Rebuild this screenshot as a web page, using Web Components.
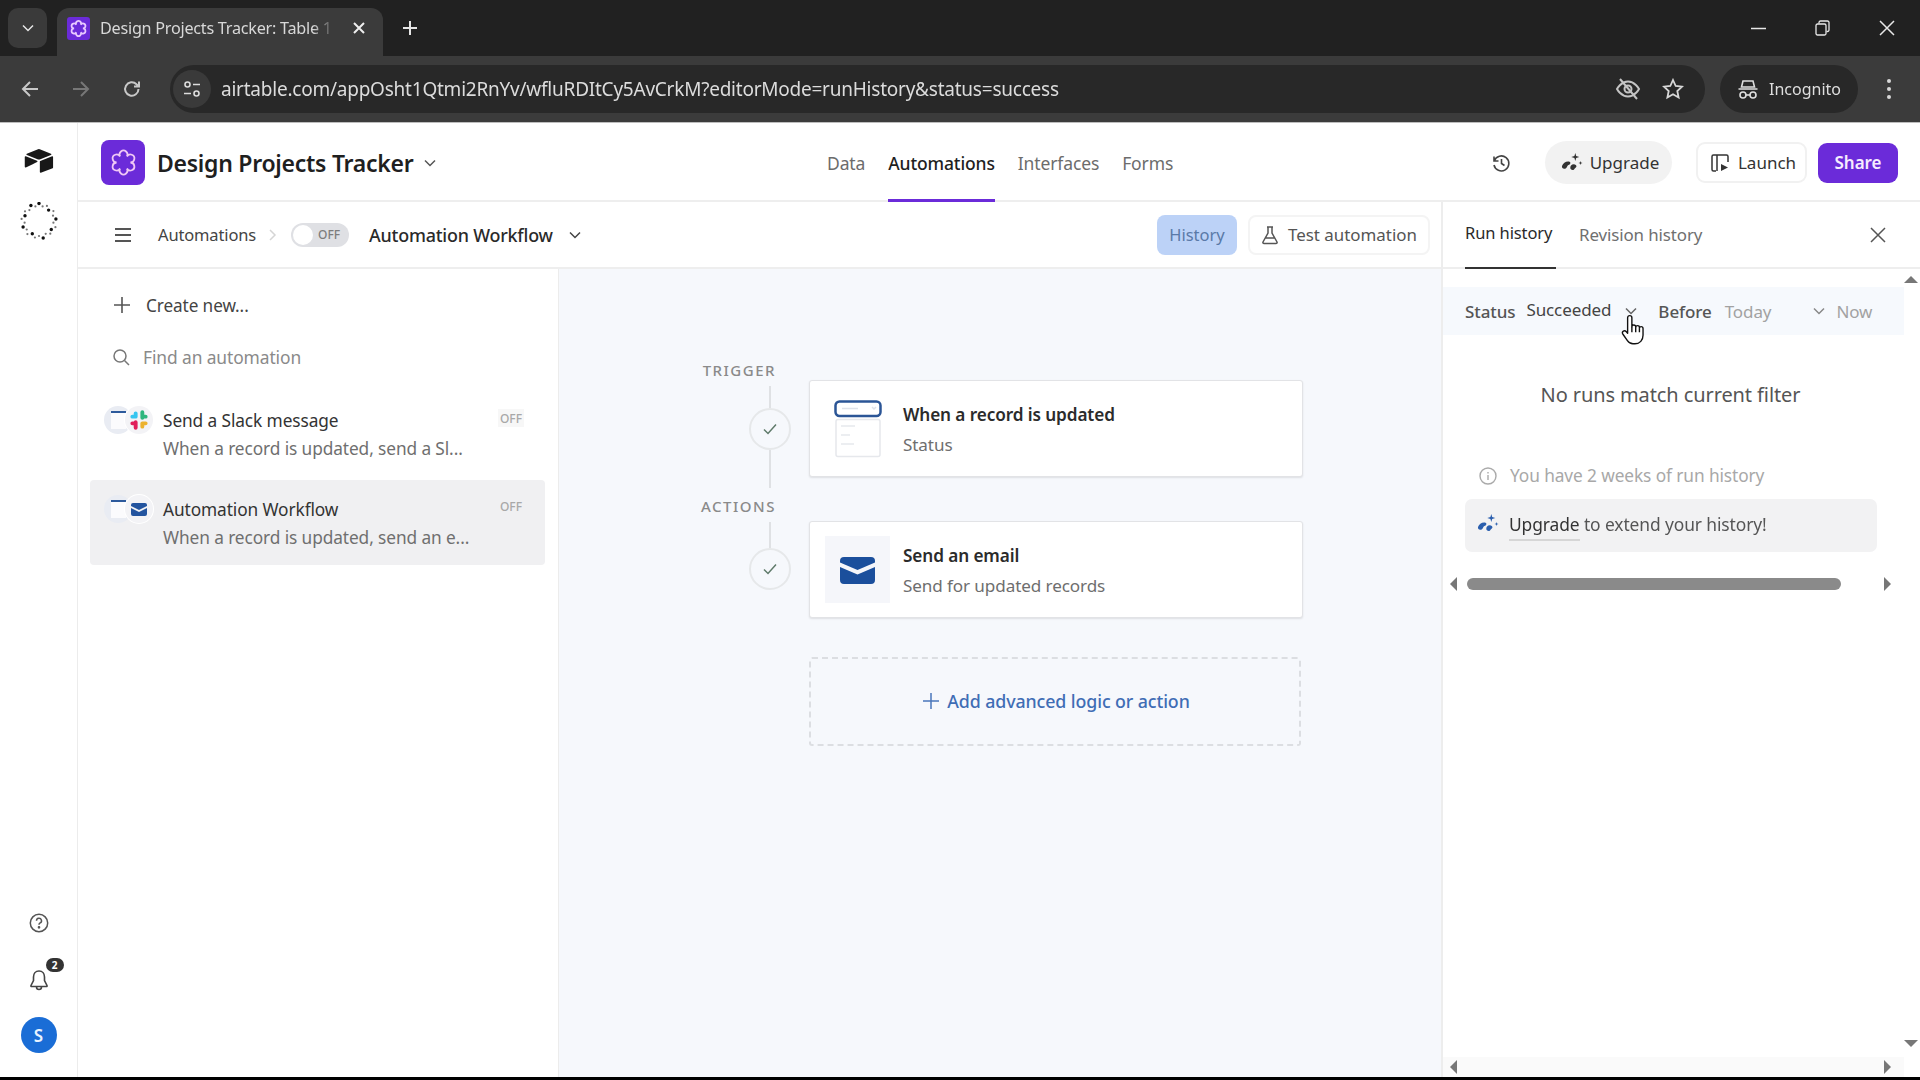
<!DOCTYPE html>
<html lang="en"><head><meta charset="utf-8"><title>Design Projects Tracker</title>
<style>
html,body{margin:0;padding:0;width:1920px;height:1080px;overflow:hidden;background:#000}
body{font-family:"Noto Sans","Open Sans",sans-serif;display:flex;flex-direction:column}
</style></head><body>
<browser-chrome></browser-chrome>
<app-frame></app-frame>
<script>
const def=(n,css,html)=>customElements.define(n,class extends HTMLElement{constructor(){super();this.attachShadow({mode:'open'}).innerHTML=`<style>${css}</style>${html}`}});
const FLOWER='M14.5 7.67A2.9 2.9 0 1 1 17 12A2.9 2.9 0 1 1 14.5 16.33A2.9 2.9 0 1 1 9.5 16.33A2.9 2.9 0 1 1 7 12A2.9 2.9 0 1 1 9.5 7.67A2.9 2.9 0 1 1 14.5 7.67Z';
const SPARK=(c)=>`<svg width="24" height="24" viewBox="0 0 24 24" fill="${c}"><path d="M2 15c1-3 4-5 7-4.500 1.500.3 1.800 1.500 1 2.500-.5.7-1.300.8-2 1.300-1 .8-1 2.500-2.300 3.200C3.500 18.500 1.500 17 2 15z"/><path d="M11 14.500c1.200-1.300 3.500-1.500 4.800-.5 1 .8.8 2-.2 2.700-1 .7-1.300 2-2.500 2.300-1.500.3-2.800-.8-2.800-2.200 0-.9.200-1.700.7-2.300z"/><path d="M15.300 2l.9 3.100 3.100.9-3.100.9-.9 3.100-.9-3.100-3.100-.9 3.100-.9zM20.500 10l.5 1.500 1.500.5-1.500.5-.5 1.500-.5-1.500-1.500-.5 1.500-.5z"/></svg>`;
const CHEV=(c,w=14)=>`<svg width="${w}" height="${w}" viewBox="0 0 14 14" fill="none" stroke="${c}" stroke-width="1.500"><path d="M2 4.500l5 5 5-5"/></svg>`;

def('browser-chrome',`
:host{display:block;height:123px;flex:none;background:#3b3b3b;color:#e3e3e3;filter:blur(.35px)}
.strip{height:56px;background:#212121;display:flex;align-items:flex-end;padding-left:8px;box-sizing:border-box}
.list{width:39px;height:40px;background:#3a3a3a;border-radius:10px;display:flex;align-items:center;justify-content:center;margin-bottom:8px}
.tab{width:326px;height:48px;margin-left:10px;background:#3b3b3b;border-radius:12px 12px 0 0;display:flex;align-items:center;padding:0 0 8px 10px;box-sizing:border-box}
.fav{width:23px;height:23px;border-radius:3px;background:#6b2bd9;display:flex;align-items:center;justify-content:center;flex:none}
.ttl{font-size:16.200px;letter-spacing:-.25px;color:#d8d8d8;margin-left:10px;width:236px;white-space:nowrap;flex:none;-webkit-mask-image:linear-gradient(90deg,#000 90%,transparent);mask-image:linear-gradient(90deg,#000 90%,transparent)}
.x{margin-left:16px;display:flex}
.plus{margin:0 0 8px 19px;height:40px;display:flex;align-items:center}
.win{margin-left:auto;display:flex;align-self:center;gap:49px;padding-right:25px;align-items:center}
.bar{height:67px;box-sizing:border-box;display:flex;align-items:center;padding:0 0 1px 20px;border-bottom:1px solid #bdbdbd}
.nav{display:flex;width:20px;height:20px;align-items:center;justify-content:center;margin-right:31px}
.url{margin-left:-3px;width:1535px;height:48px;background:#282828;border-radius:24px;display:flex;align-items:center;box-sizing:border-box}
.info{width:38px;height:38px;margin-left:3px;border-radius:50%;background:#3a3a3a;display:flex;align-items:center;justify-content:center;flex:none}
.txt{margin-left:10px;font-size:19px;letter-spacing:-.23px;color:#dcdcdc;white-space:nowrap;flex:1}
.eye{display:flex;margin-right:21px}
.star{display:flex;margin-right:21px}
.inc{margin-left:15px;width:138px;height:48px;background:#282828;border-radius:24px;display:flex;align-items:center;padding-left:17px;box-sizing:border-box;font-size:16px;gap:10px;color:#dedede}
.dots{margin-left:28px;display:flex}
`,`
<div class="strip">
 <div class="list">${CHEV('#e6e6e6')}</div>
 <div class="tab"><span class="fav"><svg width="21" height="21" viewBox="0 0 24 24" fill="none" stroke="#e8c9ff" stroke-width="2"><path d="${FLOWER}"/></svg></span><span class="ttl">Design Projects Tracker: Table 1</span>
 <span class="x"><svg width="14" height="14" viewBox="0 0 14 14" stroke="#eee" stroke-width="2"><path d="M2 2l10 10M12 2L2 12"/></svg></span></div>
 <div class="plus"><svg width="16" height="16" viewBox="0 0 16 16" stroke="#e6e6e6" stroke-width="2"><path d="M8 1v14M1 8h14"/></svg></div>
 <div class="win">
  <svg width="15" height="15" viewBox="0 0 15 15" stroke="#e8e8e8" stroke-width="1.500"><path d="M0 7.500h15"/></svg>
  <svg width="15" height="16" viewBox="0 0 15 16" fill="none" stroke="#e8e8e8" stroke-width="1.300"><rect x="1" y="4" width="10" height="11" rx="1.500"/><path d="M4 3.500V2.500a1.500 1.500 0 0 1 1.500-1.500h7A1.500 1.500 0 0 1 14 2.500V10a1.500 1.500 0 0 1-1.500 1.500H11.500"/></svg>
  <svg width="16" height="16" viewBox="0 0 16 16" stroke="#e8e8e8" stroke-width="1.500"><path d="M1 1l14 14M15 1L1 15"/></svg>
 </div>
</div>
<div class="bar">
 <span class="nav"><svg width="20" height="20" viewBox="0 0 20 20" fill="none" stroke="#c8c8c8" stroke-width="2"><path d="M18 10H3M10 3l-7 7 7 7"/></svg></span>
 <span class="nav"><svg width="20" height="20" viewBox="0 0 20 20" fill="none" stroke="#777" stroke-width="2"><path d="M2 10h15M10 3l7 7-7 7"/></svg></span>
 <span class="nav"><svg width="20" height="20" viewBox="0 0 20 20" fill="none" stroke="#c8c8c8" stroke-width="2"><path d="M16.500 10a6.700 6.700 0 1 1-2-4.800L17 7.500M17 2.500v5h-5"/></svg></span>
 <div class="url">
  <span class="info"><svg width="20" height="20" viewBox="0 0 20 20" fill="none" stroke="#dcdcdc" stroke-width="1.600"><circle cx="5.500" cy="5.500" r="2.500"/><path d="M11 5.500h7M2 14.500h7"/><circle cx="14.500" cy="14.500" r="2.500"/></svg></span>
  <span class="txt">airtable.com/appOsht1Qtmi2RnYv/wfluRDItCy5AvCrkM?editorMode=runHistory&amp;status=success</span>
  <span class="eye"><svg width="26" height="26" viewBox="0 0 26 26" fill="none" stroke="#c4c4c4" stroke-width="2"><path d="M2 13s4-7.500 11-7.500S24 13 24 13s-4 7.500-11 7.500S2 13 2 13z"/><circle cx="13" cy="13" r="3.500"/><path d="M5 3l17 20"/></svg></span>
  <span class="star"><svg width="22" height="22" viewBox="0 0 22 22" fill="none" stroke="#d8d8d8" stroke-width="1.800"><path d="M11 2l2.700 6 6.300.7-4.700 4.300 1.300 6.500L11 16.300 5.400 19.500 6.700 13 2 8.700 8.300 8z"/></svg></span>
 </div>
 <div class="inc"><svg width="22" height="22" viewBox="0 0 22 22" fill="none" stroke="#dedede" stroke-width="1.600"><path d="M6 3h10l1.500 6h-13zM1.500 11h19" /><circle cx="6" cy="17" r="3"/><circle cx="16" cy="17" r="3"/><path d="M9 17h4"/></svg><span>Incognito</span></div>
 <span class="dots"><svg width="6" height="22" viewBox="0 0 6 22" fill="#d8d8d8"><circle cx="3" cy="3" r="2"/><circle cx="3" cy="11" r="2"/><circle cx="3" cy="19" r="2"/></svg></span>
</div>`);

const dots=(()=>{let s='';for(let i=0;i<26;i++){const a=i/26*Math.PI*2,r=[17.500,15,17,14.500][i%4],x=19+r*Math.sin(a),y=19-r*Math.cos(a);s+=`<circle cx="${x.toFixed(1)}" cy="${y.toFixed(1)}" r="${i%3?1.1:1.7}" fill="${i%3?'#777':'#111'}"/>`}return s})();
def('side-rail',`
:host{display:flex;flex-direction:column;align-items:center;width:78px;flex:none;box-sizing:border-box;border-right:1px solid #ececec;background:#fff;padding:24px 0 24px}
.spin{margin-top:27px;display:flex}
.help{margin-top:auto;display:flex}
.bell{margin-top:36px;position:relative;display:flex}
.badge{position:absolute;left:17px;top:-11px;width:18px;height:14px;border-radius:7px;background:#333;color:#fff;font-size:10px;font-weight:700;display:flex;align-items:center;justify-content:center}
.av{margin-top:25px;width:36px;height:36px;border-radius:50%;background:#1a6dd6;color:#e8f3ff;font-size:17px;font-weight:600;display:flex;align-items:center;justify-content:center}
`,`
<svg width="32" height="28" viewBox="0 0 200 170" fill="#181818"><path d="M90.039 12.368L24.08 39.66c-3.668 1.518-3.63 6.728.061 8.19l66.235 26.267a24.6 24.6 0 0 0 18.12 0l66.236-26.266c3.69-1.463 3.729-6.673.06-8.191L108.834 12.368a24.6 24.6 0 0 0-18.795 0"/><path d="M105.312 88.461v65.617c0 3.121 3.147 5.258 6.048 4.108l73.807-28.648a4.42 4.42 0 0 0 2.79-4.108V59.813c0-3.121-3.147-5.258-6.048-4.108l-73.807 28.648a4.42 4.42 0 0 0-2.79 4.108"/><path d="M88.078 91.846l-21.904 10.576-2.224 1.075-46.238 22.155c-2.931 1.414-6.672-.722-6.672-3.977V60.082c0-1.178.604-2.195 1.414-2.961.338-.339.721-.618 1.119-.839 1.105-.663 2.681-.84 4.021-.31l70.116 27.781c3.564 1.414 3.844 6.414.368 8.093"/></svg>
<span class="spin"><svg width="38" height="38" viewBox="0 0 38 38">${dots}</svg></span>
<span class="help"><svg width="20" height="20" viewBox="0 0 20 20" fill="none" stroke="#555" stroke-width="1.500"><circle cx="10" cy="10" r="8.700"/><path d="M7.500 7.700a2.500 2.500 0 1 1 3.700 2.200c-.8.5-1.200 1-1.200 1.800" /><circle cx="10" cy="14.300" r=".6" fill="#555"/></svg></span>
<span class="bell"><svg width="20" height="23" viewBox="0 0 20 23" fill="none" stroke="#444" stroke-width="1.600"><path d="M10 2c-3.500 0-5.500 2.600-5.500 6v3.500L2 16.500c-.3.600 0 1 .7 1h14.600c.7 0 1-.4.700-1l-2.500-5V8c0-3.400-2-6-5.500-6zM7.500 18a2.500 2.500 0 0 0 5 0"/></svg><span class="badge">2</span></span>
<span class="av">S</span>`);

def('top-bar',`
:host{display:grid;grid-template-columns:749px auto 1fr;height:79px;box-sizing:border-box;border-bottom:2px solid #eeeeee;background:#fff}
.base{display:flex;align-items:center;padding-left:23px}
.ic{width:44px;height:45px;border-radius:8px;background:#6b2bd9;display:flex;align-items:center;justify-content:center}
h1{font-size:23px;font-weight:600;color:#1f1f1f;margin:0 0 0 12px;letter-spacing:-.27px;white-space:nowrap}
.cv{margin-left:10px;display:flex}
nav{display:flex;gap:23px}
nav a{display:flex;align-items:center;height:79px;box-sizing:border-box;font-size:17.500px;color:#6c6c6c;letter-spacing:-.13px;border-bottom:3px solid transparent;padding-top:3px}
nav a.on{color:#1f1f1f;font-weight:500;border-bottom-color:#6b2bd9}
.r{display:flex;align-items:center;justify-content:flex-end;padding-right:22px}
.hist{display:flex;margin-right:34px}
.up{width:127px;height:43px;background:#f2f2f2;border-radius:22px;display:flex;align-items:center;justify-content:center;gap:6px;font-size:17px;color:#333;margin-right:24px;box-sizing:border-box;padding-left:2px}
.lau{width:111px;height:41px;box-sizing:border-box;border:2px solid #f1f1f1;border-radius:9px;display:flex;align-items:center;justify-content:center;gap:8px;font-size:17px;color:#333;margin-right:11px;padding-left:3px}
.sh{width:80px;height:40px;background:#6b2bd9;color:#f6ecff;border-radius:9px;display:flex;align-items:center;justify-content:center;font-size:17px;font-weight:600}
`,`
<div class="base"><span class="ic"><svg width="33" height="33" viewBox="0 0 24 24" fill="none" stroke="#f0c8f5" stroke-width="1.300"><path d="${FLOWER}"/></svg></span><h1>Design Projects Tracker</h1><span class="cv">${CHEV('#555')}</span></div>
<nav><a>Data</a><a class="on">Automations</a><a>Interfaces</a><a>Forms</a></nav>
<div class="r">
 <span class="hist"><svg width="20" height="20" viewBox="0 0 20 20" fill="none" stroke="#444" stroke-width="1.600"><path d="M3 3.500V8h4.500M3.300 7.800A7.500 7.500 0 1 1 3 12"/><path d="M10.500 6v4.500l3 2"/></svg></span>
 <span class="up">${SPARK('#333')}<span>Upgrade</span></span>
 <span class="lau"><svg width="20" height="20" viewBox="0 0 20 20" fill="none" stroke="#333" stroke-width="1.500"><path d="M6 18H3.500A1.500 1.500 0 0 1 2 16.500v-13A1.500 1.500 0 0 1 3.500 2h13A1.500 1.500 0 0 1 18 3.500V9M7 2v16"/><path d="M11 11l7 3.500-7 3.500z" fill="#333" stroke="none"/></svg><span>Launch</span></span>
 <span class="sh">Share</span>
</div>`);

def('sub-bar',`
:host{display:flex;align-items:center;height:67px;box-sizing:border-box;border-bottom:2px solid #eeeeee;background:#fff;padding:0 11px 0 35px;font-size:16.500px;color:#444}
.bg{display:flex}
.a{margin-left:25px;letter-spacing:-.15px}
.sep{margin:0 13px 0 12px;display:flex}
.tg{width:58px;height:24px;border-radius:12px;background:#dfe0e4;display:flex;align-items:center;padding:0 2px;box-sizing:border-box;font-size:12px;color:#7d7d7d;font-weight:500}
.tg i{width:20px;height:20px;border-radius:50%;background:#fff;margin-right:5px;flex:none}
.n{margin-left:20px;font-size:17.900px;font-weight:500;color:#2a2a2a;letter-spacing:-.2px}
.c{margin-left:15px;display:flex}
.hi{margin-left:auto;width:80px;height:40px;border-radius:8px;background:#bcd2f7;color:#5a7aa8;display:flex;align-items:center;justify-content:center}
.te{margin-left:11px;width:182px;height:40px;box-sizing:border-box;border:2px solid #f4f4f4;border-radius:8px;display:flex;align-items:center;justify-content:center;gap:9px;color:#555;font-size:16.900px}
`,`
<span class="bg"><svg width="20" height="18" viewBox="0 0 20 18" stroke="#555" stroke-width="2"><path d="M2 3h16M2 9h16M2 15h16"/></svg></span>
<span class="a">Automations</span><span class="sep"><svg width="10" height="14" viewBox="0 0 10 14" fill="none" stroke="#d5d5d5" stroke-width="1.500"><path d="M2 2l5 5-5 5"/></svg></span>
<span class="tg"><i></i>OFF</span>
<span class="n">Automation Workflow</span><span class="c">${CHEV('#444')}</span>
<span class="hi">History</span>
<span class="te"><svg width="18" height="20" viewBox="0 0 18 20" fill="none" stroke="#555" stroke-width="1.500"><path d="M6 2h6M7 2v6L2 17c-.4.800.2 1.500 1 1.500h12c.8 0 1.400-.7 1-1.500l-5-9V2M4.500 13h9"/></svg><span>Test automation</span></span>`);

def('auto-item',`
:host{display:flex;height:85px;margin:0 13px 0 12px;padding:0 0 0 14px;box-sizing:border-box;border-radius:4px;position:relative}
:host([active]){background:#f0f0f2}
.ics{display:flex;flex:none;width:59px;padding-top:11px;box-sizing:border-box}
:host([active]) .ics{padding-top:15px}
.t{flex:1;padding-top:14px;min-width:0}
:host([active]) .t{padding-top:18px}
.h{font-size:17.300px;line-height:24px;color:#333;letter-spacing:-.1px}
.s{font-size:17.300px;line-height:24px;margin-top:4px;color:#6f6f6f;letter-spacing:-.1px;white-space:nowrap}
.off{flex:none;width:26px;height:18px;margin:14px 21px 0 0;background:#f7f7f7;color:#a8a8a8;font-size:12px;font-weight:500;display:flex;align-items:center;justify-content:center;align-self:flex-start}
:host([active]) .off{background:transparent;margin-top:17px}
`,`<div class="ics"><slot name="icons"></slot></div><div class="t"><div class="h"><slot name="title"></slot></div><div class="s"><slot name="sub"></slot></div></div><div class="off">OFF</div>`);

def('mini-icons',`
:host{display:flex;width:50px;height:28px}
.c{width:28px;height:28px;border-radius:50%;background:#e9ecf3;display:flex;align-items:flex-start;justify-content:center;flex:none}
.c+.c{margin-left:-7px;background:#f3f3f6;align-items:center;position:relative;box-shadow:0 0 0 1px #fff}
.w{width:15px;height:18px;margin-top:5px;background:#fbfbfd;border-top:2px solid #2d5a9c;box-sizing:border-box}
`,`<span class="c"><span class="w"></span></span><span class="c"><slot></slot></span>`);

def('auto-list',`
:host{display:block;width:481px;flex:none;box-sizing:border-box;border-right:1px solid #ececec;background:#fff}
.cr{display:flex;align-items:center;height:24px;margin:24px 0 0 35px;font-size:17.200px;color:#444;gap:15px;letter-spacing:-.1px}
.fi{display:flex;align-items:center;height:24px;margin:28px 0 0 34px;font-size:17.400px;color:#8a8a8a;gap:13px;letter-spacing:-.1px}
.items{margin-top:26px;display:flex;flex-direction:column}
`,`
<div class="cr"><svg width="18" height="18" viewBox="0 0 18 18" stroke="#555" stroke-width="1.600"><path d="M9 1v16M1 9h16"/></svg><span>Create new...</span></div>
<div class="fi"><svg width="18" height="18" viewBox="0 0 18 18" fill="none" stroke="#777" stroke-width="1.500"><circle cx="8" cy="8" r="6"/><path d="M12.500 12.500L17 17"/></svg><span>Find an automation</span></div>
<div class="items">
<auto-item><mini-icons slot="icons"><svg width="20" height="20" viewBox="0 0 18 18" fill="none" stroke-width="3.500" stroke-linecap="round"><path d="M6 3v3M3 6h3" stroke="#36C5F0"/><path d="M12 2v5M15 6h-3" stroke="#2EB67D"/><path d="M12 15v-3M15 12h-3" stroke="#ECB22E"/><path d="M6 11v5M3 12h3" stroke="#E01E5A"/></svg></mini-icons><span slot="title">Send a Slack message</span><span slot="sub">When a record is updated, send a Sl...</span></auto-item>
<auto-item active><mini-icons slot="icons"><svg width="16" height="13" viewBox="0 0 16 13"><path d="M2 0h12a2 2 0 0 1 2 2v1L8 7 0 3V2a2 2 0 0 1 2-2z" fill="#23549f"/><path d="M0 5l8 4 8-4v6a2 2 0 0 1-2 2H2a2 2 0 0 1-2-2z" fill="#23549f"/></svg></mini-icons><span slot="title">Automation Workflow</span><span slot="sub">When a record is updated, send an e...</span></auto-item>
</div>`);

def('flow-step',`
:host{display:grid;grid-template-columns:250px 494px}
.l{display:flex;flex-direction:column;align-items:flex-end;padding-right:33px}
.lb{font-size:15px;font-weight:500;letter-spacing:1.500px;color:#8a8a8a;line-height:18px;white-space:nowrap}
.tl{width:42px;margin-right:-15px;display:flex;flex-direction:column;align-items:center}
.tl i{width:2px;background:#dfe1e4;display:block}
.ci{width:42px;height:42px;box-sizing:border-box;border:2px solid #e6e8ea;border-radius:50%;background:#f6f8fc;display:flex;align-items:center;justify-content:center;flex:none}
.card{height:97px;box-sizing:border-box;background:#fff;border:1px solid #e2e3e6;border-radius:3px;box-shadow:0 1px 2px rgba(0,0,0,.1);display:flex;align-items:center;position:relative}
.ic{width:93px;flex:none;display:flex;justify-content:flex-end;padding-right:13px;box-sizing:border-box}
.tx{padding-top:2px}
.h{font-size:17.200px;font-weight:600;color:#2b2b2b;line-height:24px;letter-spacing:-.1px;padding-top:1px}
.s{font-size:17.100px;color:#6e6e6e;line-height:24px;margin-top:6px;letter-spacing:-.1px}
`,`
<div class="l"><span class="lb"><slot name="label"></slot></span><div class="tl"><i id="a" style="margin-top:7px;height:var(--l1,21px)"></i><span class="ci"><svg width="18" height="18" viewBox="0 0 18 18" fill="none" stroke="#5f7a6a" stroke-width="1.500"><path d="M3 9.500l4 4 8-9"/></svg></span><i id="b" style="height:var(--l2,38px)"></i></div></div>
<div class="cw"><div class="card" style="margin-top:var(--cm,18px)"><div class="ic"><slot name="icon"></slot></div><div class="tx"><div class="h"><slot name="title"></slot></div><div class="s"><slot name="sub"></slot></div></div></div></div>`);

def('flow-canvas',`
:host{display:block;flex:1;background:#f6f8fc;padding-top:92px;box-sizing:border-box;min-width:0}
flow-step+flow-step{margin-top:9px}
.add{margin:39px 0 0 250px;width:492px;height:89px;box-sizing:border-box;border:2px dashed #dcdee2;border-radius:3px;display:flex;align-items:center;justify-content:center;gap:8px;font-size:17.800px;font-weight:500;color:#3f6db5;letter-spacing:-.1px;padding:0 0 1px 3px}
`,`
<flow-step style="--l1:22px;--l2:38px;--cm:19px"><span slot="label">TRIGGER</span>
 <svg slot="icon" style="margin-right:8px" width="48" height="58" viewBox="0 0 48 58"><rect x="2" y="19.500" width="44" height="37" rx="2" fill="#fff" stroke="#e6e8ec" stroke-width="1.500"/><path d="M7 26h14M7 35h9M7 44h13" stroke="#eceef1" stroke-width="2"/><rect x="1.500" y="1.500" width="45" height="14.500" rx="4" fill="#fff" stroke="#2b5596" stroke-width="2.500"/><path d="M8 8.500h16M38 7l2 2 2-2" stroke="#dfe3ea" stroke-width="1.500" fill="none"/></svg>
 <span slot="title">When a record is updated</span><span slot="sub">Status</span></flow-step>
<flow-step style="--l1:26px;--l2:0px;--cm:24px"><span slot="label">ACTIONS</span>
 <span slot="icon" style="display:flex"><svg width="65" height="67" viewBox="0 0 65 67"><rect width="65" height="67" fill="#f5f6fa"/><path d="M19 21h27a4 4 0 0 1 4 4v1.500L32.500 34 15 26.500V25a4 4 0 0 1 4-4z" fill="#1b4f9c"/><path d="M15 31l17.500 7.500L50 31v13a4 4 0 0 1-4 4H19a4 4 0 0 1-4-4z" fill="#1b4f9c"/></svg></span>
 <span slot="title">Send an email</span><span slot="sub">Send for updated records</span></flow-step>
<div class="add"><svg width="16" height="16" viewBox="0 0 16 16" stroke="#4a76ba" stroke-width="1.500"><path d="M8 0v16M0 8h16"/></svg><span>Add advanced logic or action</span></div>`);

def('h-scroll',`
:host{display:flex;align-items:center;justify-content:space-between;padding:0 13px 0 7px;height:20px;box-sizing:border-box}
.th{flex:1;height:12px;margin:0 0 0 10px;display:flex}
.th i{width:var(--thumb,0);height:12px;border-radius:6px;background:#8a8a8a;display:block}
s{display:block;width:0;height:0;border-style:solid;border-width:7px 0;border-color:transparent}
.l{border-right:7px solid #777;border-left:0}
.ri{border-left:7px solid #777;border-right:0}
`,`<s class="l"></s><div class="th"><i></i></div><s class="ri"></s>`);

def('run-panel',`
:host{display:flex;flex-direction:column;width:479px;flex:none;box-sizing:border-box;border-left:2px solid #ededed;background:#fff;position:relative}
.tabs{display:flex;align-items:stretch;height:67px;box-sizing:border-box;border-bottom:2px solid #eeeeee;padding:0 34px 0 22px;font-size:16.500px;color:#6f6f6f;letter-spacing:-.1px}
.tabs a{display:flex;align-items:center;margin-bottom:-2px;border-bottom:2px solid transparent}
.tabs a.on{color:#2a2a2a;border-bottom-color:#333;width:91px;white-space:nowrap;padding-bottom:4px}
.tabs a+a{margin-left:23px;font-size:16.900px}
.tabs .x{margin-left:auto;display:flex;align-items:center}
.body{flex:1;display:flex;min-height:0}
.ct{width:461px;flex:none;display:flex;flex-direction:column}
.fl{margin-top:18px;height:48px;background:#f6f9fd;display:flex;align-items:center;padding-left:22px;font-size:17px;color:#555;letter-spacing:-.1px;white-space:nowrap}
.fl b{font-weight:500;color:#555}
.su{margin:-3px 0 0 11px;color:#444}
.gr{color:#a2a2a2}
.no{margin-top:46px;text-align:center;font-size:20px;line-height:28px;color:#555;letter-spacing:-.1px;width:455px}
.you{margin:55px 0 0 36px;display:flex;align-items:center;gap:13px;font-size:17.300px;line-height:24px;color:#a8a8a8;letter-spacing:-.1px}
.box{margin:11px 0 0 22px;width:412px;height:53px;background:#f2f2f3;border-radius:7px;display:flex;align-items:center;padding:0 0 3px 11px;box-sizing:border-box;gap:9px;font-size:17.400px;color:#555;letter-spacing:-.1px}
.box u{text-decoration:none;color:#333;border-bottom:2px solid #d6d6d6;padding-bottom:3px;margin-bottom:-3px}
h-scroll.in{margin-top:22px;--thumb:374px}
h-scroll.bt{margin-top:auto;background:#fafafa}
.vs{flex:1;display:flex;flex-direction:column;justify-content:space-between;align-items:center;padding:7px 4px 30px 0}
.vs s{display:block;width:0;height:0;border-style:solid;border-width:0 7px;border-color:transparent}
.vs .u{border-bottom:7px solid #777;border-top:0}
.vs .d{border-top:7px solid #777;border-bottom:0}
.cur{position:absolute;left:178px;top:111px}
`,`
<div class="tabs"><a class="on">Run history</a><a>Revision history</a><span class="x"><svg width="16" height="16" viewBox="0 0 16 16" stroke="#555" stroke-width="1.500"><path d="M1 1l14 14M15 1L1 15"/></svg></span></div>
<div class="body"><div class="ct">
 <div class="fl"><b>Status</b><span class="su">Succeeded</span><span style="margin-left:13px;display:flex">${CHEV('#666')}</span><b style="margin-left:20px">Before</b><span class="gr" style="margin-left:13px">Today</span><span style="margin-left:41px;display:flex">${CHEV('#888')}</span><span class="gr" style="margin-left:10px">Now</span></div>
 <div class="no">No runs match current filter</div>
 <div class="you"><svg width="18" height="18" viewBox="0 0 18 18" fill="none" stroke="#aaa" stroke-width="1.400"><circle cx="9" cy="9" r="8"/><path d="M9 8v5M9 5v1.500"/></svg><span>You have 2 weeks of run history</span></div>
 <div class="box">${SPARK('#2b5fae')}<span><u>Upgrade</u> to extend your history!</span></div>
 <h-scroll class="in"></h-scroll>
 <h-scroll class="bt"></h-scroll>
</div><div class="vs"><s class="u"></s><s class="d"></s></div></div>
<svg class="cur" width="26" height="34" viewBox="0 0 24 32" fill="#fff" stroke="#111" stroke-width="1.300" stroke-linejoin="round"><path d="M8 2.500c1.200 0 2 .9 2 2V13c0-1 .7-1.700 1.800-1.700s1.800.7 1.800 1.700v.5c0-1 .7-1.600 1.700-1.600s1.800.7 1.800 1.700v.7c0-.9.7-1.500 1.600-1.500s1.800.7 1.800 1.800V21c0 4.500-3 8-7.600 8H11c-2.600 0-4-1.200-5.200-3L1.600 20c-.8-1.200-.5-2.400.4-3 .9-.6 2-.3 2.800.6L6 19V4.500c0-1.100.8-2 2-2z"/><path d="M10 13v5M13.600 13.500V18M17.100 14.500V18" fill="none"/></svg>`);

def('app-frame',`
:host{display:flex;flex-direction:column;flex:none;height:957px;background:#000}
.app{display:flex;height:954px;background:#fff;filter:blur(.35px)}
.right{flex:1;display:flex;flex-direction:column;min-width:0}
.low{flex:1;display:flex;min-height:0}
.main{flex:1;display:flex;flex-direction:column;min-width:0}
.mid{flex:1;display:flex;min-height:0}
`,`<div class="app"><side-rail></side-rail><div class="right"><top-bar></top-bar><div class="low"><div class="main"><sub-bar></sub-bar><div class="mid"><auto-list></auto-list><flow-canvas></flow-canvas></div></div><run-panel></run-panel></div></div></div>`);
</script>
</body></html>
